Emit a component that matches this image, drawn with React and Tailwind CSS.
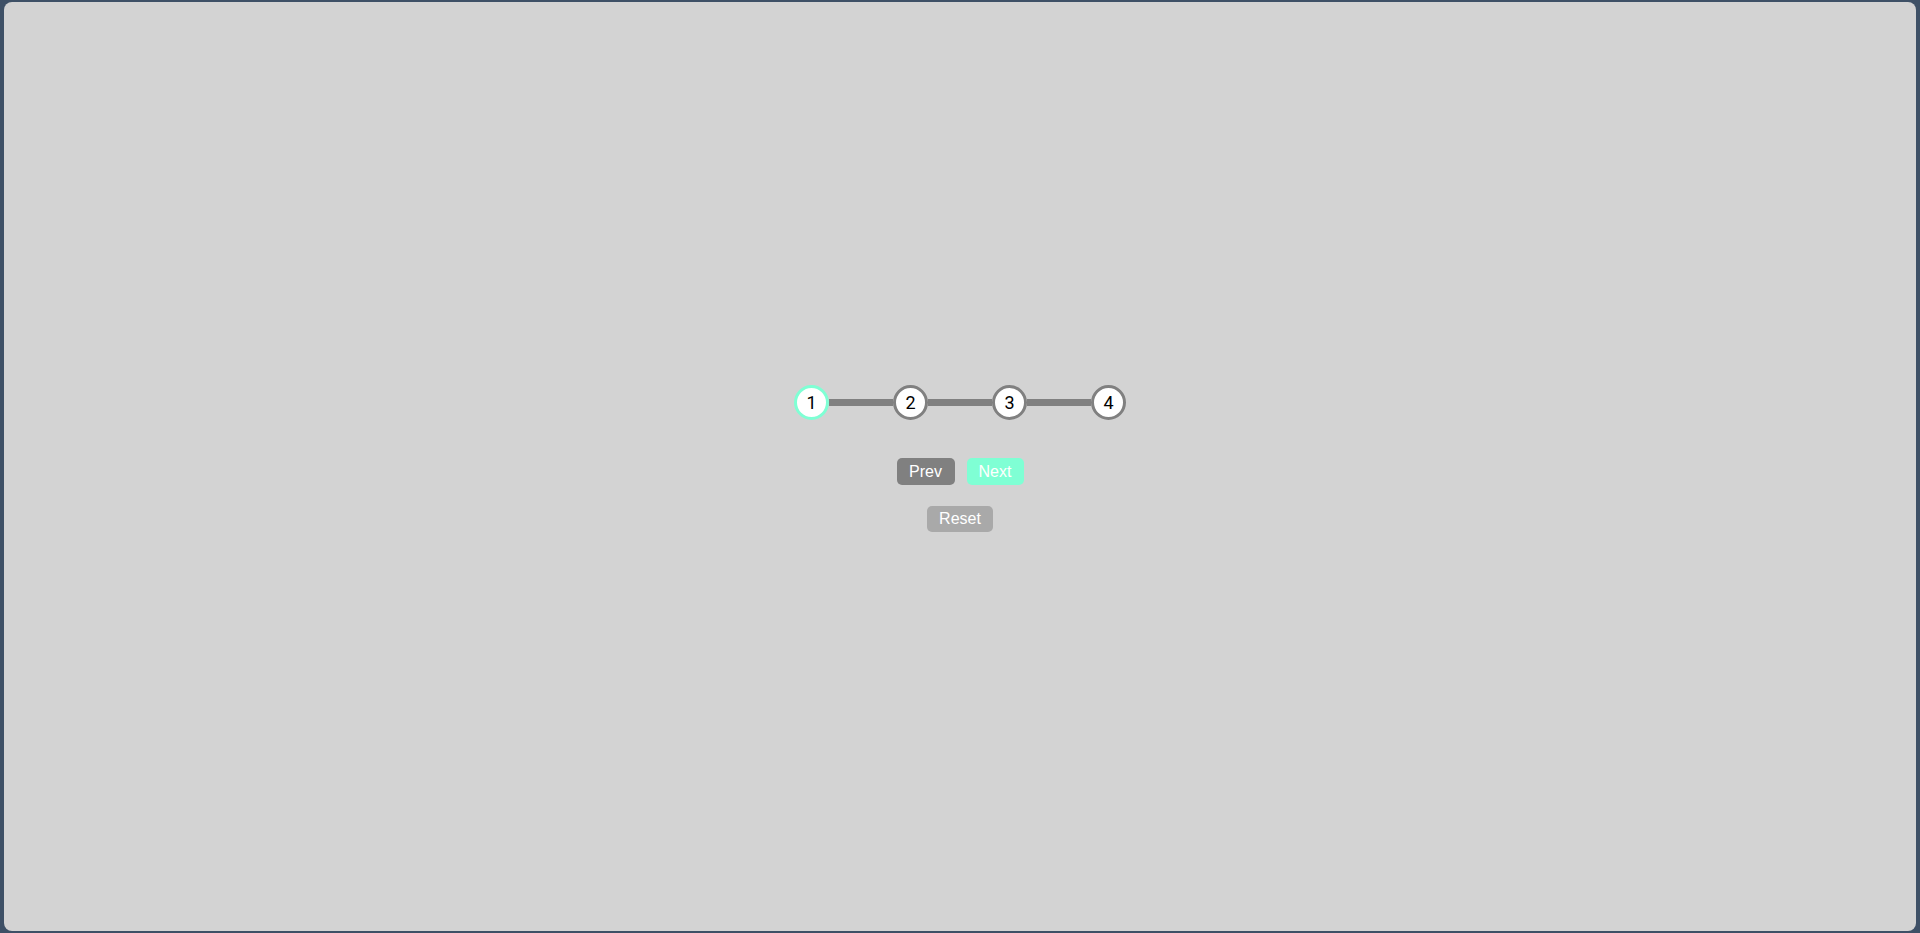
import { useState } from 'react'

const steps = [1, 2, 3, 4]

export default function App() {
  const [current, setCurrent] = useState(1)

  return (
    <div className="h-[933px] w-full bg-[#3e5066] px-[4px] py-[2px]" style={{ fontFamily: '"Liberation Sans", Arial, sans-serif' }}>
      <div className="h-full w-full rounded-[8px] bg-[#d3d3d3] flex flex-col items-center pt-[383px]">
        {/* Stepper */}
        <div className="flex items-center">
          {steps.map((s, i) => (
            <div key={s} className="flex items-center">
              {i > 0 && <div className={`w-[64px] h-[7px] ${s <= current ? 'bg-[#7fffd4]' : 'bg-[#808080]'}`} />}
              <div className={`w-[35px] h-[35px] rounded-full bg-white border-[3px] flex items-center justify-center text-[18px] text-black ${s <= current ? 'border-[#7fffd4]' : 'border-[#808080]'}`} style={{ fontFamily: 'Roboto, sans-serif' }}>
                {s}
              </div>
            </div>
          ))}
        </div>

        {/* Prev / Next */}
        <div className="flex items-center gap-[12px] mt-[38px]">
          <button onClick={() => setCurrent(c => Math.max(1, c - 1))} className="h-[27px] w-[58px] rounded-[5px] bg-[#808080] text-white text-[16px] leading-none">Prev</button>
          <button onClick={() => setCurrent(c => Math.min(4, c + 1))} className="h-[27px] w-[57px] rounded-[5px] bg-[#7fffd4] text-white text-[16px] leading-none">Next</button>
        </div>

        <button onClick={() => setCurrent(1)} className="mt-[21px] h-[26px] w-[66px] rounded-[5px] bg-[#a9a9a9] text-white text-[16px] leading-none">Reset</button>
      </div>
    </div>
  )
}
